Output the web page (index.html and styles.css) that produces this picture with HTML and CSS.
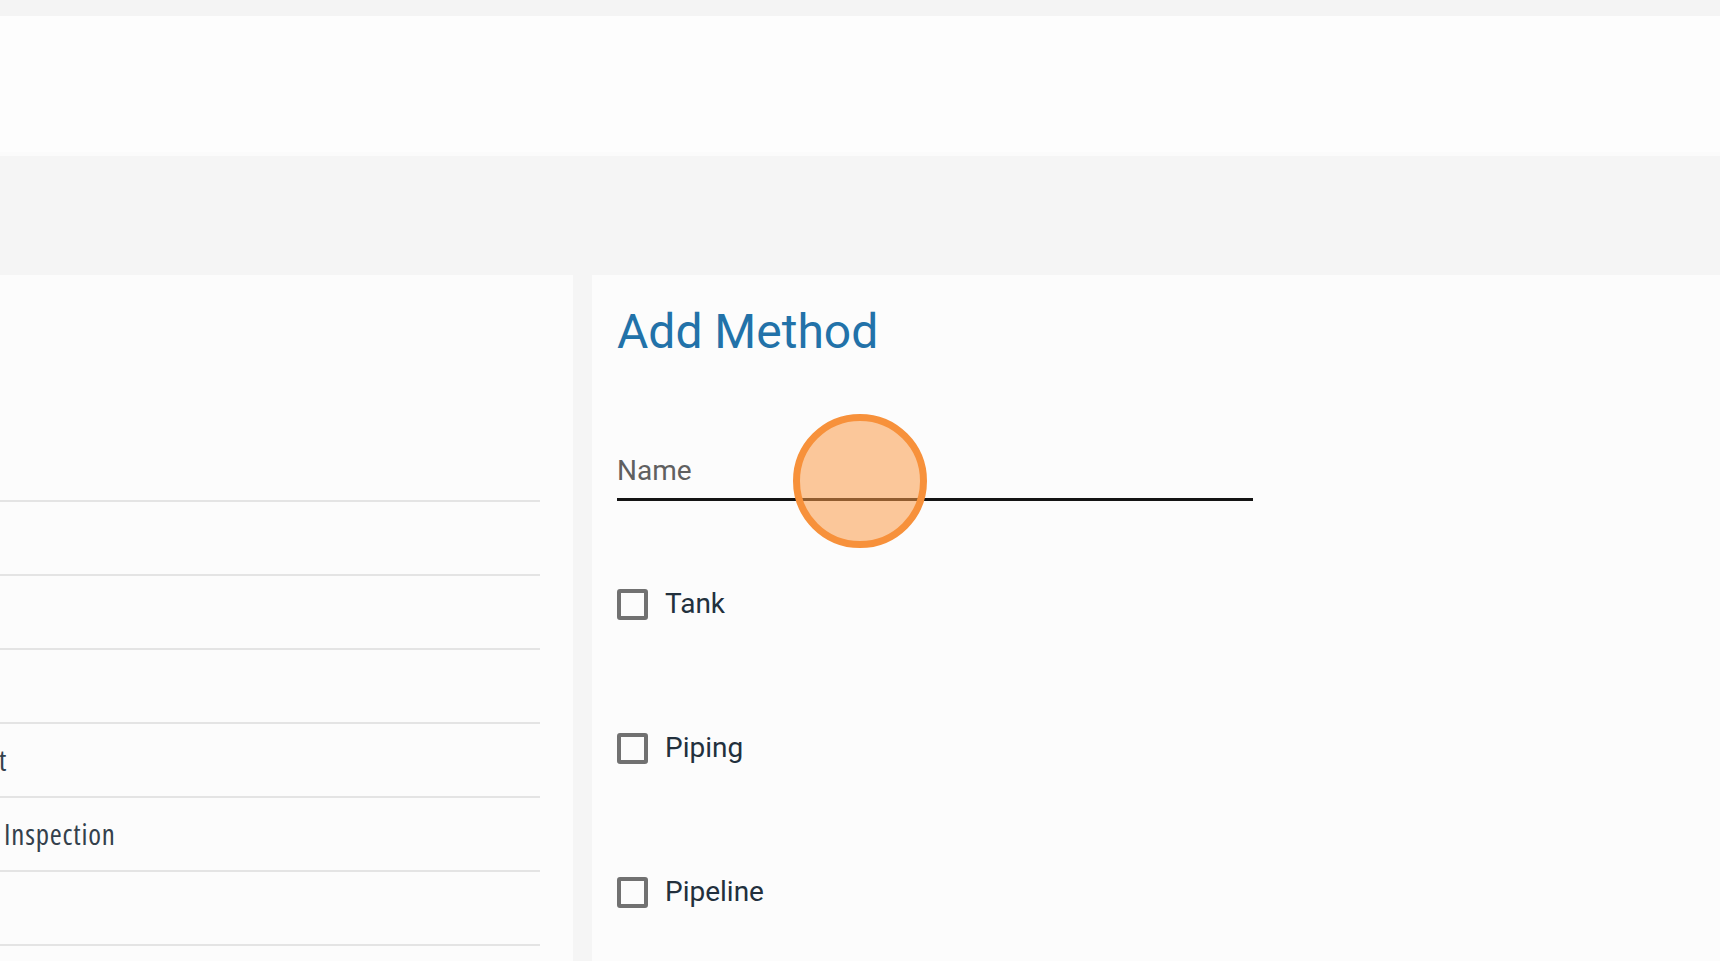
FILE: index.html
```html
<!DOCTYPE html>
<html lang="en">
<head>
<meta charset="utf-8">
<title>Add Method</title>
<link rel="stylesheet" href="styles.css">
</head>
<body>
<div class="page">
  <div class="top-strip"></div>
  <header class="app-header"></header>
  <div class="band"></div>
  <main class="main">
    <section class="list-panel">
      <div class="list-head"></div>
      <ul class="method-list">
        <li class="method-row"></li>
        <li class="method-row"></li>
        <li class="method-row"></li>
        <li class="method-row"><span class="row-text row-text-a">t</span></li>
        <li class="method-row"><span class="row-text row-text-b">Inspection</span></li>
        <li class="method-row"></li>
      </ul>
    </section>
    <section class="form-panel">
      <h1 class="form-title">Add Method</h1>
      <div class="field">
        <label class="field-label" for="name">Name</label>
      </div>
      <div class="checks">
        <label class="check-row"><span class="box"></span><span class="check-text">Tank</span></label>
        <label class="check-row"><span class="box"></span><span class="check-text">Piping</span></label>
        <label class="check-row"><span class="box"></span><span class="check-text">Pipeline</span></label>
      </div>
      <div class="click-marker"></div>
    </section>
  </main>
</div>
</body>
</html>
```

FILE: styles.css
```css
html, body {
  margin: 0;
  padding: 0;
  height: 100%;
}
body {
  font-family: Roboto, "Liberation Sans", Arial, sans-serif;
  background: #f5f5f5;
  overflow: hidden;
}
.page {
  display: flex;
  flex-direction: column;
  height: 961px;
}
.top-strip {
  height: 16px;
  background: #f4f4f4;
  flex: none;
}
.app-header {
  height: 140px;
  background: #fdfdfd;
  box-shadow: inset 0 -4px 0 #fbfbfb;
  flex: none;
}
.band {
  height: 119px;
  background: #f5f5f5;
  flex: none;
}
.main {
  flex: 1;
  display: flex;
  gap: 19px;
  background: #f5f5f5;
  min-height: 0;
}
.list-panel {
  width: 573px;
  flex: none;
  background: #fcfcfc;
  overflow: hidden;
}
.list-head {
  height: 225px;
}
.method-list {
  list-style: none;
  margin: 0;
  padding: 0;
  width: 540px;
  border-top: 2px solid #e4e4e4;
}
.method-row {
  height: 72px;
  border-bottom: 2px solid #e4e4e4;
  font-family: "Open Sans", "DejaVu Sans Condensed", sans-serif;
  font-stretch: 75%;
  font-size: 29px;
  letter-spacing: 0.8px;
  line-height: 72px;
  color: #34414c;
  white-space: nowrap;
}
.row-text-a {
  margin-left: -1px;
}
.row-text-b {
  margin-left: 4px;
}
.form-panel {
  flex: 1;
  background: #fcfcfc;
  padding: 27px 0 0 25px;
  position: relative;
}
.form-title {
  margin: 0;
  font-size: 48px;
  line-height: 60px;
  font-weight: 400;
  color: #2272a9;
}
.field {
  margin-top: 93px;
  width: 636px;
  padding-bottom: 11px;
  border-bottom: 3px solid #141414;
}
.field-label {
  display: block;
  font-size: 28px;
  line-height: 32px;
  color: #606060;
}
.checks {
  margin-top: 87px;
  display: flex;
  flex-direction: column;
  gap: 112px;
}
.check-row {
  display: flex;
  align-items: center;
  gap: 17px;
  height: 32px;
}
.box {
  width: 31px;
  height: 31px;
  box-sizing: border-box;
  border: 4px solid #717171;
  border-radius: 3px;
  flex: none;
}
.check-text {
  font-size: 28px;
  line-height: 32px;
  color: #22303d;
}
.click-marker {
  position: absolute;
  left: 201px;
  top: 139px;
  width: 134px;
  height: 134px;
  box-sizing: border-box;
  border-radius: 50%;
  border: 7px solid #f7913b;
  background: rgba(250, 153, 70, 0.54);
}
```
